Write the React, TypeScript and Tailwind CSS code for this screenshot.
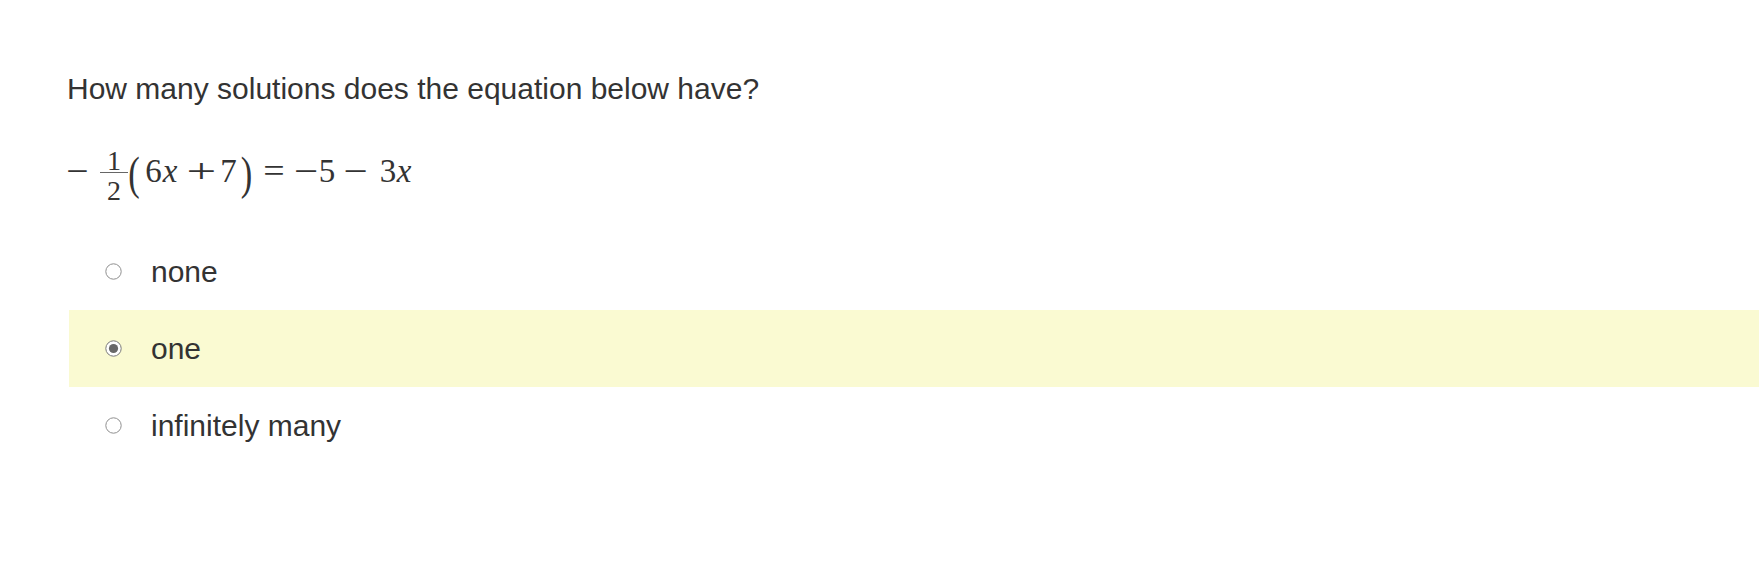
import React from "react";

const options = [
  { label: "none", checked: false },
  { label: "one", checked: true },
  { label: "infinitely many", checked: false },
];

function Radio({ checked }: { checked: boolean }) {
  return (
    <svg width="17" height="17" viewBox="0 0 17 17" className="shrink-0">
      <circle
        cx="8.5"
        cy="8.5"
        r="7.7"
        fill="#fff"
        stroke={checked ? "#7a7a7a" : "#8f8f8f"}
        strokeWidth="1"
      />
      {checked ? <circle cx="8.5" cy="8.5" r="4.6" fill="#686868" /> : null}
    </svg>
  );
}

// one glyph of the formula, centred in a fixed-width box
function G({
  children,
  className = "",
}: {
  children: React.ReactNode;
  className?: string;
}) {
  return (
    <span className={"flex shrink-0 justify-center overflow-visible " + className}>
      {children}
    </span>
  );
}

function Equation() {
  return (
    <div
      className="flex h-[60px] items-center text-[33px] leading-none text-[#333]"
      style={{ fontFamily: '"Liberation Serif", serif' }}
    >
      <G className="ml-[3px] w-[15px] scale-x-[1.2]">−</G>
      <span className="ml-[15px] mt-[10px] flex w-[28px] shrink-0 flex-col items-center text-[28px]">
        <span className="leading-[28px]">1</span>
        <span className="mt-[-3px] h-px w-[28px] bg-[#666]" />
        <span className="mt-[4px] leading-[28px]">2</span>
      </span>
      <G className="ml-[1px] mt-[6px] w-[10px] scale-x-[0.75] text-[46px]">(</G>
      <G className="ml-[7px] w-[15px]">6</G>
      <G className="w-[18px] italic">x</G>
      <G className="ml-[9px] w-[27px] scale-x-[1.6]">+</G>
      <G className="ml-[6px] w-[15px]">7</G>
      <G className="ml-[4px] mt-[6px] w-[13px] scale-x-[0.75] text-[46px]">)</G>
      <G className="ml-[10px] w-[22px] scale-x-[1.15]">=</G>
      <G className="ml-[13px] w-[16px] scale-x-[1.3]">−</G>
      <G className="ml-[5px] w-[16px]">5</G>
      <G className="ml-[11px] w-[19px] scale-x-[1.3]">−</G>
      <G className="ml-[16px] w-[14px]">3</G>
      <G className="w-[18px] italic">x</G>
    </div>
  );
}

export default function App() {
  return (
    <div
      className="h-[576px] w-full overflow-hidden bg-white pl-[67px] pt-[72px] text-[#333]"
      style={{ fontFamily: '"Liberation Sans", Arial, sans-serif' }}
    >
      <p className="text-[30px] leading-[34px]">
        How many solutions does the equation below have?
      </p>

      <div className="mt-[35px]">
        <Equation />
      </div>

      <div className="ml-[2px] mt-[32px] flex flex-col">
        {options.map((o) => (
          <div
            key={o.label}
            className={
              "flex h-[77px] items-center pl-[36px] " +
              (o.checked ? "bg-[#fafad2]" : "")
            }
          >
            <Radio checked={o.checked} />
            <span className="ml-[29px] text-[30px] leading-[34px] text-[#333]">
              {o.label}
            </span>
          </div>
        ))}
      </div>
    </div>
  );
}
